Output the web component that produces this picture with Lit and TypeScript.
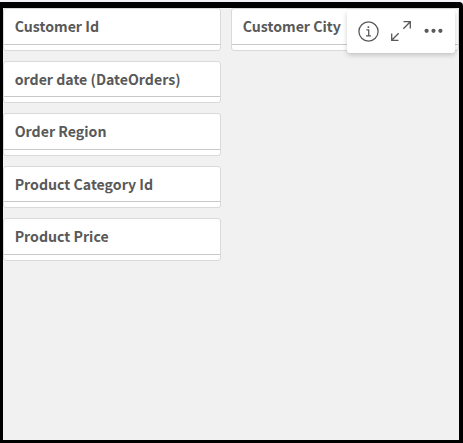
import { LitElement, html, css } from "lit";
import { customElement, property } from "lit/decorators.js";
import { classMap } from "lit/directives/class-map.js";

@customElement("filter-field")
class FilterField extends LitElement {
  @property() label = "";
  @property({ type: Boolean }) compact = false;

  static styles = css`
    :host { display: block; }
    .card {
      box-sizing: border-box;
      height: 43px;
      border: 1px solid #d9d9d9;
      border-radius: 3px;
      background: #fff;
      overflow: hidden;
    }
    .head {
      box-sizing: border-box;
      height: 36px;
      padding: 7px 0 0 10.7px;
      border-bottom: 1px solid #c9c9c9;
      color: #595959;
      font: 700 14.15px/20px "Noto Sans CJK SC", "Open Sans", sans-serif;
      white-space: nowrap;
    }
    .card.compact { height: 42px; }
    .compact .head { height: 35px; }
  `;

  render() {
    return html`<div class=${classMap({ card: true, compact: this.compact })}>
      <div class="head"><span>${this.label}</span></div>
    </div>`;
  }
}

@customElement("app-root")
class AppRoot extends LitElement {
  static styles = css`
    :host {
      display: block;
      box-sizing: border-box;
      height: 443px;
      padding-top: 2px;
      background: #f3f4f7;
    }
    .frame {
      position: relative;
      box-sizing: border-box;
      height: 441px;
      border: solid #000;
      border-width: 6px 4px 3px 3px;
      border-top-right-radius: 4px;
      background: #f1f1f1;
    }
    .columns {
      display: grid;
      grid-template-columns: 218px 228px;
      gap: 10px;
      align-items: start;
    }
    .column { display: grid; gap: 10px; }
    .toolbar {
      position: absolute;
      top: 2px;
      right: 4px;
      box-sizing: border-box;
      width: 108px;
      height: 43px;
      display: flex;
      align-items: center;
      padding: 0 0 1px 11px;
      gap: 11px;
      border-radius: 3px;
      background: #fff;
      box-shadow: 0 2px 5px rgba(0, 0, 0, 0.2);
    }
    svg { display: block; flex: none; fill: none; stroke: #595959; }
    .dots { fill: #595959; stroke: none; }
  `;

  render() {
    const fields = ["Customer Id", "order date (DateOrders)", "Order Region", "Product Category Id", "Product Price"];
    return html`
      <div class="frame">
        <div class="columns">
          <div class="column">
            ${fields.map((f, i) => html`<filter-field .label=${f} .compact=${i % 2 === 1}></filter-field>`)}
          </div>
          <div class="column"><filter-field label="Customer City"></filter-field></div>
        </div>
        <div class="toolbar">
          <svg width="21" height="21" viewBox="0 0 21 21">
            <circle cx="10.5" cy="10.5" r="9.6" stroke-width="1.3" />
            <path d="M8.4 8.9h2.3v5.8M8 14.8h5" stroke-width="1.3" />
            <path d="M9.6 6.1h1.6" stroke-width="1.7" />
          </svg>
          <svg width="22" height="22" viewBox="0 0 22 22" stroke-width="1.3">
            <path d="M13.5 1.7h6.8v6.8M20.3 1.7l-7 7M1.7 13.5v6.8h6.8M1.7 20.3l7-7" />
          </svg>
          <svg class="dots" width="20" height="20" viewBox="0 0 20 20">
            <circle cx="3.6" cy="9.8" r="2.1" /><circle cx="10.5" cy="9.8" r="2.1" /><circle cx="17.4" cy="9.8" r="2.1" />
          </svg>
        </div>
      </div>
    `;
  }
}
